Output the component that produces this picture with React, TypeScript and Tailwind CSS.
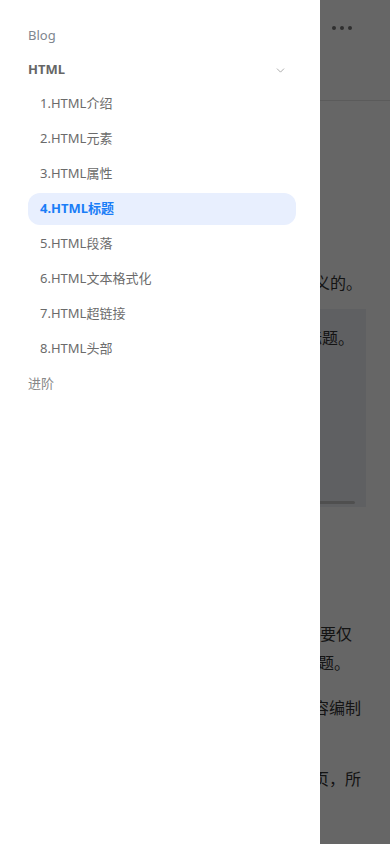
import React from 'react';
import { ChevronDown } from 'lucide-react';

const chapters = [
  '1.HTML介绍',
  '2.HTML元素',
  '3.HTML属性',
  '4.HTML标题',
  '5.HTML段落',
  '6.HTML文本格式化',
  '7.HTML超链接',
  '8.HTML头部',
];

const active = '4.HTML标题';

const pageFont = { fontFamily: '"Noto Sans CJK SC", "Noto Sans", sans-serif' };
const navFont = { fontFamily: '"Noto Sans", "Noto Sans CJK SC", sans-serif' };

const ArticlePage: React.FC = () => (
  <div className="h-[844px] bg-white text-[#333] text-base" style={pageFont}>
    <header className="h-[101px] border-b border-[#e4e4e4] flex justify-end pt-[26px] pr-[38px]">
      <div className="flex gap-1 h-1">
        <span className="w-1 h-1 rounded-full bg-[#777]" />
        <span className="w-1 h-1 rounded-full bg-[#777]" />
        <span className="w-1 h-1 rounded-full bg-[#777]" />
      </div>
    </header>

    <main className="px-4">
      <h1 className="mt-[44px] text-2xl leading-8 font-bold">HTML 标题</h1>
      <p className="mt-[26px] leading-7">在 HTML 文档中，标题很重要。</p>
      <p className="mt-[37px] leading-7 text-right pr-[12px] whitespace-nowrap">标题是通过 h1 - h6 标签进行定义的。</p>

      {/* example box */}
      <div className="mt-[13px] mr-[8px] h-[198px] bg-[#eef0f4] flex flex-col justify-between pt-[14px] pb-[3px]">
        <p className="leading-7 text-right pr-[12px] whitespace-nowrap">h1 这是一个标题。</p>
        <div className="h-[3px] mr-[11px] bg-[#c6c6c6] rounded-full" />
      </div>

      <p className="mt-[112px] leading-[29px] text-right pr-[22px] whitespace-nowrap">请确保将 HTML 标题标签只用于标题。不要仅</p>
      <p className="leading-[29px] text-right pr-[24px] whitespace-nowrap">仅是为了生成粗体或大号的文本而使用标题。</p>
      <p className="mt-[16px] leading-[29px] text-right pr-[13px] whitespace-nowrap">搜索引擎使用标题为您的网页的结构和内容编制</p>
      <p className="leading-[29px]">索引。</p>
      <p className="mt-[13px] leading-[29px] text-right pr-[13px] whitespace-nowrap">因为用户可以通过标题来快速浏览您的网页，所</p>
    </main>
  </div>
);

const Drawer: React.FC = () => (
  <aside className="fixed left-0 top-0 h-full w-[320px] bg-white text-[13px]" style={navFont}>
    <nav className="pl-7 pr-6 pt-5 flex flex-col">
      <div className="h-8 flex items-center text-[#80868f]">Blog</div>
      <div className="mt-[2px] h-8 flex items-center justify-between pr-[9px] font-bold text-[#666]">
        <span>HTML</span>
        <ChevronDown size={13} strokeWidth={1.5} className="text-[#999]" />
      </div>
      {chapters.map((c, i) => (
        <div
          key={c}
          className={
            (i === 0 ? 'mt-[2px] ' : 'mt-[3px] ') +
            (c === active
              ? 'h-8 flex items-center pl-3 rounded-xl bg-[#e8effe] text-[#1a7df7] font-bold'
              : 'h-8 flex items-center pl-3 text-[#6b6b6b]')
          }
        >
          {c}
        </div>
      ))}
      <div className="mt-[3px] h-8 flex items-center text-[#888]">进阶</div>
    </nav>
  </aside>
);

const App: React.FC = () => (
  <div className="relative h-[844px] overflow-hidden">
    <ArticlePage />
    <div className="fixed inset-0 bg-black/60" />
    <Drawer />
  </div>
);

export default App;
